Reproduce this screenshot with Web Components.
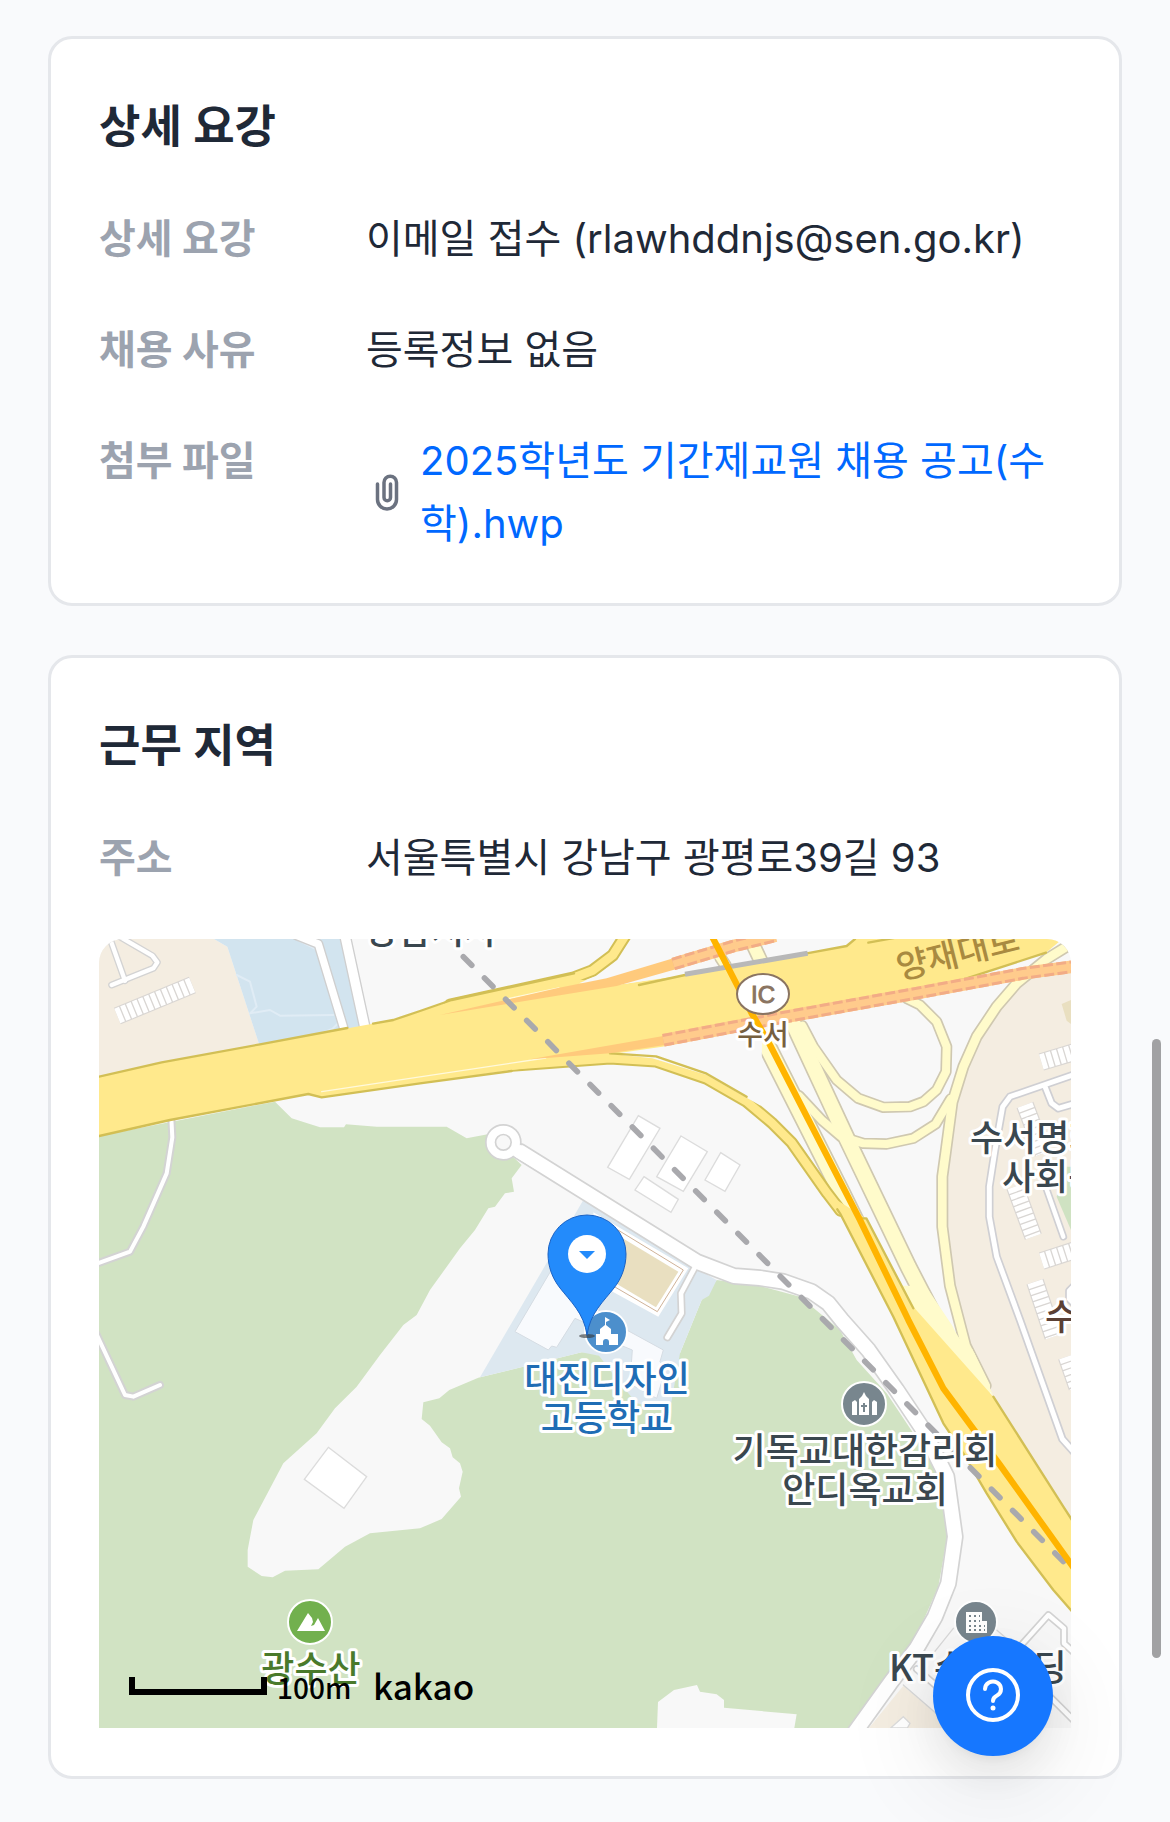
<!DOCTYPE html>
<html lang="ko">
<head>
<meta charset="utf-8">
<meta name="viewport" content="width=device-width, initial-scale=1">
<title>상세 요강</title>
<style>
  body {
    margin: 0;
    background: #f9fafc;
    color: #1f2937;
    font-family: Inter, "Noto Sans CJK KR", sans-serif;
    font-size: 40px;
    line-height: 63px;
  }
  main { display: flex; flex-direction: column; gap: 49px; padding: 36px 48px 43px; }
</style>
</head>
<body>
<main>
  <info-card heading="상세 요강">
    <info-row label="상세 요강">이메일 접수 (rlawhddnjs@sen.go.kr)</info-row>
    <info-row label="채용 사유">등록정보 없음</info-row>
    <info-row label="첨부 파일"><file-link href="#file">2025학년도 기간제교원 채용 공고(수학).hwp</file-link></info-row>
  </info-card>
  <info-card heading="근무 지역">
    <info-row label="주소">서울특별시 강남구 광평로39길 93</info-row>
    <area-map></area-map>
  </info-card>
</main>
<help-button label="도움말"></help-button>
<scroll-thumb></scroll-thumb>

<script>
class InfoCard extends HTMLElement {
  constructor() {
    super()
    this.attachShadow({ mode: 'open' })
    this.shadowRoot.innerHTML = `
      <style>
      :host { display: block; }
      section { display: flex; flex-direction: column; gap: 48px; padding: 56px 48px 48px; background: #fff; border: 3px solid #e5e7eb; border-radius: 24px; }
      h2 { margin: 0; font-size: 45px; line-height: 64px; font-weight: 600; }
      </style>
      <section>
        <h2></h2>
        <slot></slot>
      </section>
    `
  }

  connectedCallback() {
    this.shadowRoot.querySelector('h2').textContent = this.getAttribute('heading')
  }
}

class InfoRow extends HTMLElement {
  constructor() {
    super()
    this.attachShadow({ mode: 'open' })
    this.shadowRoot.innerHTML = `
      <style>
      :host { display: block; }
      dl { display: grid; grid-template-columns: 243px 1fr; gap: 24px; margin: 0; }
      dt { color: #9ca3af; font-weight: 700; }
      dd { margin: 0; min-width: 0; }
      </style>
      <dl>
        <dt></dt>
        <dd><slot></slot></dd>
      </dl>
    `
  }

  connectedCallback() {
    this.shadowRoot.querySelector('dt').textContent = this.getAttribute('label')
  }
}

class FileLink extends HTMLElement {
  constructor() {
    super()
    this.attachShadow({ mode: 'open' })
    this.shadowRoot.innerHTML = `
      <style>
      :host { display: flex; align-items: center; gap: 12px; }
      svg { flex: none; width: 42px; height: 42px; }
      a { color: #0068ff; text-decoration: none; word-break: break-all; }
      </style>
      <svg viewBox="0 0 42 42" fill="none" stroke="#6b7280" stroke-width="3.500" stroke-linecap="round" aria-hidden="true">
        <path d="M11.500 13v15.500a9.500 9.500 0 0 0 19 0V11.500a6 6 0 0 0-12.500 0V26.500a3.200 3.200 0 0 0 6.500 0V13"/>
      </svg>
      <a><slot></slot></a>
    `
  }

  connectedCallback() {
    this.shadowRoot.querySelector('a').href = this.getAttribute('href')
  }
}

class AreaMap extends HTMLElement {
  constructor() {
    super()
    this.attachShadow({ mode: 'open' })
    this._template()
  }

  // all casings first so that junctions stay open
  _roads(list, fill, casing, edge = 4) {
    const casings = list.map(([points, width]) => `<polyline points="${points}" stroke="${casing}" stroke-width="${width + edge * 2}"/>`)
    const fills = list.map(([points, width]) => `<polyline points="${points}" stroke="${fill}" stroke-width="${width}"/>`)
    return casings.join('') + fills.join('')
  }

  // row of parallel blocks
  _blocks(points) {
    return `<polyline points="${points}" stroke="#d9d6d3" stroke-width="54" stroke-linecap="butt"/>
      <polyline points="${points}" stroke="#fff" stroke-width="47" stroke-dasharray="15 4" stroke-linecap="butt"/>`
  }

  _tunnel(points) {
    return `<g stroke-linecap="butt">
      <polyline points="${points}" stroke="#ffcb8c" stroke-width="38"/>
      <polyline points="${points}" stroke="#f2ac86" stroke-width="38" stroke-dasharray="30 10"/>
      <polyline points="${points}" stroke="#ffcb8c" stroke-width="20"/>
    </g>`
  }

  _template() {
    this.shadowRoot.innerHTML = `
      <style>
      :host { display: block; margin-top: 2px; }
      svg { display: block; width: 100%; height: 789px; border-radius: 24px 24px 0 0; background: #f8f8f8; }
      text { font-family: "Noto Sans CJK KR", sans-serif; font-weight: 500; font-size: 36px; }
      .lines { fill: none; stroke-linejoin: round; stroke-linecap: round; }
      .label { fill: #3a474f; stroke: #fff; stroke-width: 6px; stroke-linejoin: round; paint-order: stroke; }
      .mid { text-anchor: middle; }
      .school { fill: #1f6db5; }
      .hill { fill: #4a7a2b; }
      .stop { fill: #5b4034; }
      .ic { fill: #77603f; font-size: 28px; }
      .badge { fill: #8a7461; stroke: #8a7461; font-family: "Liberation Sans", sans-serif; font-size: 24px; }
      .street { fill: #a98a40; font-size: 34px; }
      .scale { font-size: 28px; }
      .brand { font-size: 35px; }
      </style>
      <svg viewBox="0 0 972 789" preserveAspectRatio="xMidYMid slice" role="img" aria-label="지도">
        <g transform="scale(.33333)">
          <!-- land -->
          <polygon fill="#f4ede1" points="0,0 345,0 385,23 485,330 0,430"/>
          <polygon fill="#d2e4ef" points="345,0 385,23 485,330 790,270 725,0"/>
          <polygon fill="#f4ede1" points="2916,95 2773,123 2693,200 2593,393 2563,480 2540,640 2530,713 2530,863 2553,1040 2600,1220 2683,1373 2893,1703 2916,1740"/>
          <polygon fill="#e9dfc0" points="2888,195 2916,183 2916,255 2903,245"/>
          <polygon fill="#cfe2c2" points="2903,683 2916,683 2916,873 2873,773"/>
          <path fill="#d1e3c3" d="M0 591L528 488 578 538 663 565 735 565 741 556 833 563 1043 563 1103 598 1170 585 1268 678 1238 718 1245 758 1218 763 1188 803 1168 808 1128 873 1083 928 993 1053 953 1128 913 1158 843 1248 773 1343 708 1408 653 1483 553 1573 463 1743 446 1833 446 1883 488 1911 521 1915 558 1895 658 1891 738 1823 813 1783 963 1768 1028 1740 1086 1673 1080 1648 1091 1598 1083 1573 1061 1555 1053 1528 1028 1510 993 1460 968 1440 973 1390 1021 1378 1051 1353 1138 1316 1448 1240 1743 1243 1808 1083 1853 1023 1983 1041 2103 1073 2223 1173 2273 1263 2363 1363 2443 1483 2523 1613 2545 1793 2518 1943 2443 2113 2343 2253 2253 2367 2086 2367 2093 2326 1875 2306 1875 2283 1853 2266 1803 2258 1794 2238 1725 2253 1677 2289 1674 2367 0 2367z"/>
          <polygon fill="#dde8f0" points="1453,783 1773,978 1853,1023 1830,1070 1808,1083 1743,1243 1713,1413 1613,1393 1563,1333 1500,1250 1448,1240 1143,1315"/>
          <polygon fill="#f4ede1" points="2413,2240 2560,2367 2310,2367"/>

          <!-- buildings -->
          <g fill="#fff" stroke="#dcdcdc" stroke-width="4">
            <polygon points="688,1525 803,1613 735,1708 616,1621"/>
            <polygon points="1618,530 1683,568 1591,721 1526,685"/>
            <polygon points="1746,591 1825,638 1753,757 1673,713"/>
            <polygon points="1865,641 1923,678 1878,757 1818,723"/>
            <polygon points="1635,713 1738,781 1716,820 1608,753"/>
            <polygon points="2375,2367 2413,2333 2433,2353 2425,2367"/>
          </g>
          <g fill="#f8fafd" stroke="#d5dce3" stroke-width="3">
            <polygon points="1363,983 1248,1178 1348,1233 1358,1221 1373,1225 1428,1138 1500,1170 1500,1000"/>
            <polygon points="1583,1173 1693,1233 1683,1268 1700,1290 1673,1378 1593,1335 1600,1233 1563,1218"/>
          </g>
          <polygon fill="#fff" points="1483,820 1768,988 1678,1133 1500,1036"/>
          <polygon fill="#fff" stroke="#cfb298" stroke-width="3" points="1555,872 1753,993 1675,1118 1510,1022"/>
          <polygon fill="#e9dfc0" points="1550,885 1738,998 1671,1105 1520,1015"/>

          <g class="lines">
            <path stroke="#e0ecf5" stroke-width="6" d="M413 108l40 20 20 75-20 20 60-10 30 17 160-2M600 5l50 25M620 300l80-30 20-20"/>
            ${this._roads([['30,-10 78,125', 13], ['38,138 163,88 175,70 160,50 60,-8', 13]], '#fff', '#d3d3d3')}
            ${this._roads([['590,-12 658,15 741,290', 22], ['738,-10 803,290', 28]], '#fff', '#cfcfcf')}
            ${this._roads([['216,520 220,595 203,703 133,863 93,938 -10,975', 12], ['-10,1180 78,1368 103,1373 183,1338', 12]], '#fff', '#d3d3d3', 6)}
            ${this._blocks('55,231 280,138')}

            <!-- housing estate -->
            ${this._roads([
              ['2930,405 2733,473 2711,503 2688,633 2671,743 2671,833 2693,953 2763,1143 2890,1500 2930,1545', 15],
              ['2838,443 2858,493 2878,508 2930,493', 15],
              ['2833,723 2893,893', 13],
              ['2930,1035 2910,1055 2910,1080 2930,1100', 13]
            ], '#fff', '#cfcfd3', 5)}
            ${['2827,369 2930,338', '2778,498 2833,643', '2748,743 2803,893', '2828,966 2930,933', '2808,1028 2863,1193', '2903,1253 2935,1345'].map(this._blocks).join('')}

            <!-- white streets -->
            ${this._roads([
              ['1263,638 1793,968 1905,1011 1983,1017 2053,1028 2138,1058 2188,1093 2228,1143 2308,1233 2393,1353 2473,1473 2543,1613 2568,1793 2548,1933 2508,2033 2453,2128 2373,2233 2253,2400', 42],
              ['1793,975 1746,1063 1748,1123 1705,1195', 14]
            ], '#fff', '#d3d3d3', 5)}
            <circle cx="1213" cy="610" r="38" fill="#f8f8f8" stroke="#d3d3d3" stroke-width="34"/>
            <circle cx="1213" cy="610" r="38" stroke="#fff" stroke-width="24"/>
            <polyline points="1252,633 1330,680" stroke="#fff" stroke-width="38" stroke-linecap="butt"/>
            ${this._roads([
              ['2763,2123 2848,2028 2895,2068 2895,2113 2930,2145', 13],
              ['2453,2190 2640,2350', 13],
              ['2850,2270 2930,2350', 13]
            ], '#fff', '#d3d3d3', 5)}
            <path stroke="#d8d8d8" stroke-width="4" d="M2503 2143l60-75M2693 2073l70 60M2413 2238l150 130"/>

            <!-- ramps of the interchange -->
            ${this._roads([
              ['1815,-20 1880,80', 28],
              ['1945,-20 1985,65', 36],
              ['2078,243 2243,598 2428,983 2530,1180', 44],
              ['2003,318 2228,763 2310,930', 48],
              ['2100,470 2170,545 2225,592 2293,613 2363,615 2443,598 2510,555 2555,480', 24],
              ['2940,0 2843,60 2753,133 2693,203 2633,293 2593,383 2560,490 2540,640 2530,713 2530,863 2553,1040 2600,1220 2660,1340', 26],
              ['2423,178 2463,198 2513,248 2543,323 2541,398 2513,453 2473,488 2433,503 2353,505 2278,478 2213,423 2143,323 2110,260', 24]
            ], '#fffbcb', '#cfc8b0', 5)}
            <polygon fill="#fffbcb" points="2400,1040 2480,1040 2560,1160 2605,1250 2625,1240 2673,1340 2673,1373 2480,1200"/>

            <!-- trunk road -->
            ${this._roads([
              ['1053,198 1425,116 1480,95 1541,49 1585,-20', 26],
              ['1238,380 1533,358 1671,367 1823,419 1943,488 2018,551 2078,611 2185,763 2225,815', 25]
            ], '#ffe98c', '#d2bf55', 6)}
            <polygon fill="#ffe98c" points="0,413 188,370 483,316 883,243 963,216 1058,186 1430,120 1553,138 1758,108 2123,43 2243,21 2268,0 2890,0 2841,41 2603,118 2070,240 1703,300 1680,362 1533,355 1238,393 963,433 668,475 628,465 213,543 0,591"/>
            <polygon fill="#f8f8f8" points="1440,133 1500,108 1560,60 1600,0 1840,0 1850,92 1553,138"/>
            <polygon fill="#f8f8f8" points="1660,358 1540,345 1700,322 1990,275 1985,500 1823,408"/>
            <path stroke="#d2bf55" stroke-width="7" d="M0 413L188 370 483 316 745 267M0 591L213 543 628 465 668 475 963 433 1238 396M822 254L883 243 963 216 1058 183 1425 103M1620 138L1758 108M2123 43L2243 21 2268 0M2308 11L2390 -4M2841 41L2603 118 2530 138M1533 343L1671 352 1823 404 1943 473"/>
            <path stroke="#fff9dc" stroke-width="4" d="M668 458L1340 357M1218 181L1380 147"/>
            <polygon fill="#ffe98c" points="2185,765 2223,823 2383,1133 2533,1453 2593,1543 2663,1663 2753,1808 2863,1953 2930,2030 2930,1760 2893,1703 2683,1373 2443,1103 2300,838"/>
            <polygon fill="#fffbcb" points="2455,1095 2500,1080 2600,1225 2620,1230 2683,1370"/>
            <path stroke="#d2bf55" stroke-width="7" d="M2215 811L2223 823 2383 1133 2533 1453 2593 1543 2663 1663 2753 1808 2863 1953 2930 2030M2930 1760L2893 1703 2683 1373M2290 838L2302 838 2443 1108"/>

            <polygon fill="#ffca7c" points="1023,228 1373,148 1523,118 1723,58 1733,90 1553,141"/>
            <polygon fill="#ffca7c" points="1293,361 1693,291 1698,318 1533,343"/>
            ${this._tunnel('1723,75 1900,22 2030,-10')}
            ${this._tunnel('1693,304 2053,235 2423,168 2773,103 2930,82')}
            <path stroke="#b8b8b8" stroke-width="15" stroke-linecap="butt" d="M1758 106L2126 43"/>

            <!-- underground railway and the district line -->
            <path stroke="#a9a9ad" stroke-width="17" stroke-dasharray="36 54" d="M1093 53L2940 1915"/>
            <path stroke="#ffb400" stroke-width="19" d="M1838 -10L1958 223 2013 318 2283 843 2428 1143 2533 1348 2703 1578 2930 1895"/>
          </g>
        </g>

        <!-- places -->
        <g stroke="#fff" stroke-width="2">
          <circle cx="507" cy="393" r="21" fill="#4c8fcc"/>
          <circle cx="765" cy="465" r="22" fill="#78868e"/>
          <circle cx="211" cy="683" r="22" fill="#72b04e"/>
          <circle cx="877" cy="683" r="21" fill="#78868e"/>
        </g>
        <path fill="#fff" d="M497 406v-11h4v-5l5-4v-8l5 3-4 2v3l5 4v5h7v11h-9v-3a3 3 0 0 0-6 0v3z"/>
        <path fill="#fff" d="M753 476v-13l3-2 2 2v13zM773 476v-13l2-2 3 2v13zM760 476v-16l3-3 2-4 2 4 3 3v16z"/>
        <path stroke="#78868e" stroke-width="2" d="M765 464v9M762 467h6"/>
        <path fill="#fff" d="M198 692l11-18 4 5 1 4-2 4 3-1 4-7 7 13z"/>
        <path fill="#fff" d="M867 673h16v9h5v12h-21z"/>
        <path stroke="#78868e" stroke-width="2" stroke-dasharray="2 3" d="M870 677h11M870 682h11M870 687h16M870 691h16"/>

        <text class="label mid school" x="508" y="453">대진디자인<tspan x="508" y="492">고등학교</tspan></text>
        <text class="label mid" x="766" y="525">기독교대한감리회<tspan x="766" y="564">안디옥교회</tspan></text>
        <text class="label" x="871" y="212">수서명화<tspan x="903" y="251">사회복</tspan></text>
        <text class="label stop" x="946" y="391">수서</text>
        <text class="label mid hill" x="212" y="743">광수산</text>
        <text class="label" x="790" y="742">KT수서빌딩</text>
        <text class="label" x="266" y="5">강남지사</text>
        <text class="street" transform="translate(801 41) rotate(-14)">양재대로</text>
        <ellipse cx="664" cy="55" rx="26" ry="20" fill="#fff" stroke="#8a7461" stroke-width="2"/>
        <text class="badge mid" x="664" y="64">IC</text>
        <text class="label mid ic" x="664" y="106">수서</text>

        <!-- marker -->
        <ellipse cx="488" cy="397" rx="8" ry="2" fill="#333" opacity=".6"/>
        <path fill="#238bfb" stroke="#1a62c4" d="M488 396C485 374 471 362 461 349C453 339 449 327 449 315A39 39 0 0 1 527 315C527 327 523 339 515 349C505 362 491 374 488 396z"/>
        <circle cx="488" cy="315" r="19" fill="#fff"/>
        <path fill="#238bfb" d="M480 312h16l-8 8z"/>

        <path fill="none" stroke="#000" stroke-width="6" d="M33 738v15h132v-15"/>
        <text class="scale" x="178" y="760">100m</text>
        <text class="brand" x="274" y="761">kakao</text>
      </svg>
    `
  }
}

class HelpButton extends HTMLElement {
  constructor() {
    super()
    this.attachShadow({ mode: 'open' })
    this.shadowRoot.innerHTML = `
      <style>
      :host { display: block; position: fixed; right: 117px; bottom: 66px; }
      button { display: block; width: 120px; height: 120px; padding: 0; border: 0; border-radius: 50%; background: #1677ff; cursor: pointer;
        box-shadow: 0 18px 48px rgba(0,0,0,.08), 0 9px 18px -12px rgba(0,0,0,.12), 0 27px 84px 24px rgba(0,0,0,.05); }
      svg { display: block; }
      </style>
      <button type="button">
        <svg viewBox="0 0 120 120" fill="none" stroke="#fff" stroke-linecap="round" aria-hidden="true">
          <circle cx="60" cy="59" r="25" stroke-width="4"/>
          <path stroke-width="4" d="M52 53a8 7.500 0 1 1 12 6.500q-4 2-4 5.500"/>
          <circle cx="60" cy="72" r="2.500" fill="#fff" stroke="none"/>
        </svg>
      </button>
    `
  }

  connectedCallback() {
    this.shadowRoot.querySelector('button').setAttribute('aria-label', this.getAttribute('label'))
  }
}

class ScrollThumb extends HTMLElement {
  constructor() {
    super()
    this.attachShadow({ mode: 'open' })
    this.shadowRoot.innerHTML = `
      <style>
      :host { display: block; position: fixed; top: 57%; right: 9px; width: 9px; height: 34%; border-radius: 5px; background: #a1a1a3; }
      </style>
    `
  }
}

customElements.define('info-card', InfoCard)
customElements.define('info-row', InfoRow)
customElements.define('file-link', FileLink)
customElements.define('area-map', AreaMap)
customElements.define('help-button', HelpButton)
customElements.define('scroll-thumb', ScrollThumb)
</script>
</body>
</html>
